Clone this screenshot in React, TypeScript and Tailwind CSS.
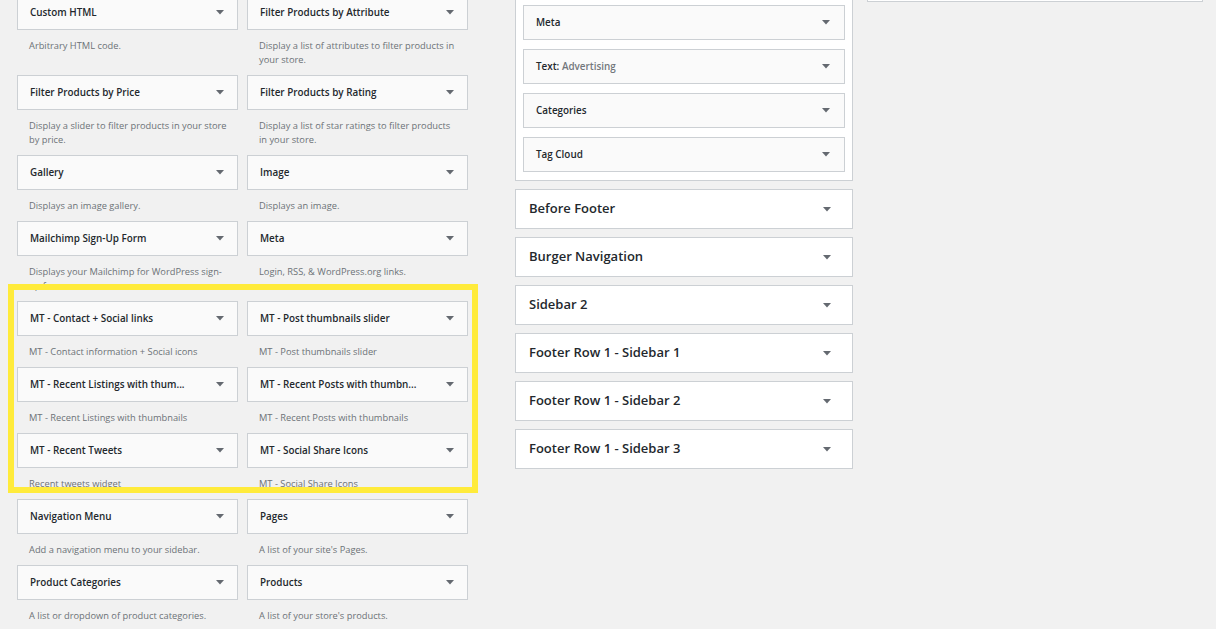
import React from "react";

const Arrow = () => (
  <svg width="8" height="5" viewBox="0 0 8 5" className="shrink-0">
    <polygon points="0,0 8,0 4,4.5" fill="#646970" />
  </svg>
);

type W = { title: React.ReactNode; desc: string[] };

const left: W[] = [
  { title: "Custom HTML", desc: ["Arbitrary HTML code."] },
  { title: "Filter Products by Attribute", desc: ["Display a list of attributes to filter products in", "your store."] },
  { title: "Filter Products by Price", desc: ["Display a slider to filter products in your store", "by price."] },
  { title: "Filter Products by Rating", desc: ["Display a list of star ratings to filter products", "in your store."] },
  { title: "Gallery", desc: ["Displays an image gallery."] },
  { title: "Image", desc: ["Displays an image."] },
  { title: "Mailchimp Sign-Up Form", desc: ["Displays your Mailchimp for WordPress sign-", "up form."] },
  { title: "Meta", desc: ["Login, RSS, & WordPress.org links."] },
  { title: "MT - Contact + Social links", desc: ["MT - Contact information + Social icons"] },
  { title: "MT - Post thumbnails slider", desc: ["MT - Post thumbnails slider"] },
  { title: "MT - Recent Listings with thum...", desc: ["MT - Recent Listings with thumbnails"] },
  { title: "MT - Recent Posts with thumbn...", desc: ["MT - Recent Posts with thumbnails"] },
  { title: "MT - Recent Tweets", desc: ["Recent tweets widget"] },
  { title: "MT - Social Share Icons", desc: ["MT - Social Share Icons"] },
  { title: "Navigation Menu", desc: ["Add a navigation menu to your sidebar."] },
  { title: "Pages", desc: ["A list of your site's Pages."] },
  { title: "Product Categories", desc: ["A list or dropdown of product categories."] },
  { title: "Products", desc: ["A list of your store's products."] },
];

const inner: React.ReactNode[] = [
  "Meta",
  <>
    Text: <span className="text-[#72777c]">Advertising</span>
  </>,
  "Categories",
  "Tag Cloud",
];

const sidebars = [
  "Before Footer",
  "Burger Navigation",
  "Sidebar 2",
  "Footer Row 1 - Sidebar 1",
  "Footer Row 1 - Sidebar 2",
  "Footer Row 1 - Sidebar 3",
];

export default function App() {
  return (
    <div className="relative w-[1216px] h-[629px] overflow-hidden bg-[#f1f1f1] flex font-['Open_Sans',sans-serif]">
      {/* Available widgets */}
      <div className="w-[515px] shrink-0 pl-[17px]">
        <div className="grid grid-cols-[221px_221px] gap-x-[9px] mt-[-5px]">
          {left.map((w, i) => (
            <div key={i}>
              <div className="h-[35px] border border-[#ccd0d4] bg-[#fafafa] flex items-center justify-between pl-[12px] pr-[13px]">
                <span className="text-[9.9px] font-semibold text-[#23282d] whitespace-nowrap">{w.title}</span>
                <Arrow />
              </div>
              <div className="pl-[12px] pt-[9px] pb-[8px] text-[9.3px] leading-[14px] text-[#6c7177]">
                {w.desc.map((l, j) => (
                  <div key={j} className="whitespace-nowrap">{l}</div>
                ))}
              </div>
            </div>
          ))}
        </div>
      </div>

      {/* Sidebars */}
      <div className="w-[338px] shrink-0 flex flex-col gap-[8px]">
        <div className="bg-white border-x border-b border-[#ccd0d4] px-[7px] pt-[5px] pb-[8px] flex flex-col gap-[9px]">
          {inner.map((t, i) => (
            <div key={i} className="h-[35px] border border-[#ccd0d4] bg-[#fafafa] flex items-center justify-between pl-[12px] pr-[14px]">
              <span className="text-[9.9px] font-semibold text-[#23282d] whitespace-nowrap">{t}</span>
              <Arrow />
            </div>
          ))}
        </div>
        {sidebars.map((s) => (
          <div key={s} className="h-[40px] bg-white border border-[#ccd0d4] flex items-center justify-between pl-[13px] pr-[21px]">
            <span className="text-[13px] font-semibold text-[#23282d] whitespace-nowrap">{s}</span>
            <Arrow />
          </div>
        ))}
      </div>

      {/* Third column */}
      <div className="ml-[14px] w-[336px] shrink-0">
        <div className="h-[2px] bg-white border-x border-b border-[#ccd0d4]" />
      </div>

      {/* Highlight */}
      <div className="pointer-events-none absolute left-[8px] top-[284px] w-[470px] h-[209px] border-[6px] border-[#ffeb3b]" />
    </div>
  );
}
